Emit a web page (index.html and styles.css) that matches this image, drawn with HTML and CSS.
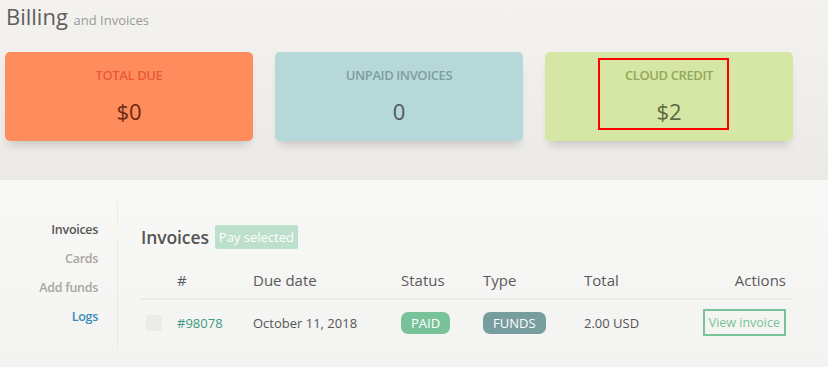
FILE: index.html
```html
<!DOCTYPE html>
<html>
<head>
<meta charset="utf-8">
<link rel="stylesheet" href="styles.css">
</head>
<body>
<section class="top">
  <h1 class="title">Billing <small>and Invoices</small></h1>
  <div class="cards">
    <div class="card card-due">
      <div class="card-label">TOTAL DUE</div>
      <div class="card-value">$0</div>
    </div>
    <div class="card card-unpaid">
      <div class="card-label">UNPAID INVOICES</div>
      <div class="card-value">0</div>
    </div>
    <div class="card card-credit">
      <div class="card-label">CLOUD CREDIT</div>
      <div class="card-value">$2</div>
      <div class="highlight"></div>
    </div>
  </div>
</section>
<section class="bottom">
  <nav class="side">
    <a class="nav-item active">Invoices</a>
    <a class="nav-item">Cards</a>
    <a class="nav-item">Add funds</a>
    <a class="nav-item logs">Logs</a>
  </nav>
  <div class="main">
    <div class="main-head">
      <h2>Invoices</h2>
      <span class="pay">Pay selected</span>
    </div>
    <table class="tbl">
      <thead>
        <tr>
          <th class="c-check"></th>
          <th class="c-num">#</th>
          <th class="c-date">Due date</th>
          <th class="c-status">Status</th>
          <th class="c-type">Type</th>
          <th class="c-total">Total</th>
          <th class="c-actions">Actions</th>
        </tr>
      </thead>
      <tbody>
        <tr>
          <td class="c-check"><span class="check"></span></td>
          <td class="c-num"><a class="inv-link">#98078</a></td>
          <td class="c-date">October 11, 2018</td>
          <td class="c-status"><span class="badge paid">PAID</span></td>
          <td class="c-type"><span class="badge funds">FUNDS</span></td>
          <td class="c-total">2.00 USD</td>
          <td class="c-actions"><span class="view">View invoice</span></td>
        </tr>
      </tbody>
    </table>
  </div>
</section>
</body>
</html>
```

FILE: styles.css
```css
* { box-sizing: border-box; }
html, body { margin: 0; padding: 0; }
body {
  width: 828px;
  height: 367px;
  overflow: hidden;
  font-family: "Open Sans", "DejaVu Sans", sans-serif;
  color: #555;
  background: #f6f6f4;
}
.top {
  height: 180px;
  background: linear-gradient(#f3f2ef, #ebeae6);
  padding: 0 0 0 5px;
}
.title {
  margin: 0;
  padding: 1px 0 0 1px;
  font-size: 22px;
  font-weight: 400;
  color: #5e5e5e;
  line-height: 30px;
  height: 52px;
}
.title small {
  font-size: 13px;
  color: #9a9a9a;
}
.cards {
  display: flex;
  gap: 22px;
}
.card {
  position: relative;
  width: 248px;
  height: 89px;
  border-radius: 5px;
  text-align: center;
  padding-top: 14px;
  box-shadow: 0 8px 10px -4px rgba(0,0,0,0.16);
}
.card-label {
  font-size: 13px;
  font-weight: 600;
  line-height: 18px;
  letter-spacing: -0.4px;
}
.card-value {
  margin-top: 13px;
  font-size: 22px;
  line-height: 28px;
}
.card-due { background: #ff8c5c; }
.card-due .card-label { color: #e85a35; }
.card-due .card-value { color: #6b2814; }
.card-unpaid { background: #b7d8d8; }
.card-unpaid .card-label { color: #7b9e9f; }
.card-unpaid .card-value { color: #4d5a5c; }
.card-credit { background: #d6e6a4; }
.card-credit .card-label { color: #93a85a; }
.card-credit .card-value { color: #5c6a40; }
.highlight {
  position: absolute;
  left: 53px;
  top: 6px;
  width: 131px;
  height: 72px;
  border: 2px solid #ff0000;
}
.bottom {
  height: 187px;
  background: linear-gradient(#f8f8f6, #f3f3f1);
  display: flex;
  padding-top: 22px;
}
.side {
  width: 118px;
  height: 146px;
  border-right: 1px solid #ebe8e2;
  display: flex;
  flex-direction: column;
  align-items: flex-end;
  padding: 13px 19px 0 0;
}
.nav-item {
  position: relative;
  font-size: 12.5px;
  font-weight: 600;
  line-height: 29px;
  color: #a9a59f;
  letter-spacing: -0.3px;
}
.nav-item.active { color: #555; }
.nav-item.active::after {
  content: "";
  position: absolute;
  right: -20px;
  top: 7px;
  width: 0;
  height: 0;
  border-top: 8px solid transparent;
  border-bottom: 8px solid transparent;
  border-right: 8px solid #fbf6ea;
}
.nav-item.logs { color: #3a8db5; }
.main {
  flex: 0 0 auto;
  width: 652px;
  margin-left: 23px;
  padding-top: 22px;
}
.main-head {
  display: flex;
  align-items: center;
  gap: 6px;
  height: 26px;
}
.main-head h2 {
  margin: 0;
  font-size: 17.5px;
  font-weight: 600;
  color: #555;
  letter-spacing: -0.1px;
}
.pay {
  background: #bde0cc;
  color: #fff;
  font-size: 13px;
  padding: 0 4px;
  line-height: 24px;
  border-radius: 2px;
}
.tbl {
  width: 651px;
  border-collapse: collapse;
  margin-top: 11px;
}
.tbl th {
  font-size: 15px;
  font-weight: 400;
  color: #5a5a5a;
  text-align: left;
  height: 38px;
  padding: 0;
  border-bottom: 2px solid #ebebe8;
  vertical-align: middle;
}
.tbl td {
  font-size: 13px;
  color: #555;
  height: 46px;
  padding: 0;
  vertical-align: middle;
}
.c-check { width: 36px; padding-left: 5px !important; }
.c-num { width: 76px; }
.c-date { width: 148px; }
.c-status { width: 82px; }
.c-type { width: 101px; }
.c-total { width: 100px; }
.tbl .c-actions { text-align: right; padding-right: 6px; }
.check {
  display: block;
  width: 16px;
  height: 16px;
  border-radius: 3px;
  background: #ebebea;
}
.inv-link { color: #3c9c80; }
.badge {
  display: inline-block;
  color: #fff;
  font-size: 13px;
  line-height: 22px;
  padding: 0 10px;
  border-radius: 7px;
}
.paid { background: #79c39a; }
.funds { background: #789d9e; }
.view {
  display: inline-block;
  border: 2px solid #79c39a;
  color: #79c39a;
  font-size: 12.5px;
  line-height: 23px;
  padding: 0 4px;
}
```
